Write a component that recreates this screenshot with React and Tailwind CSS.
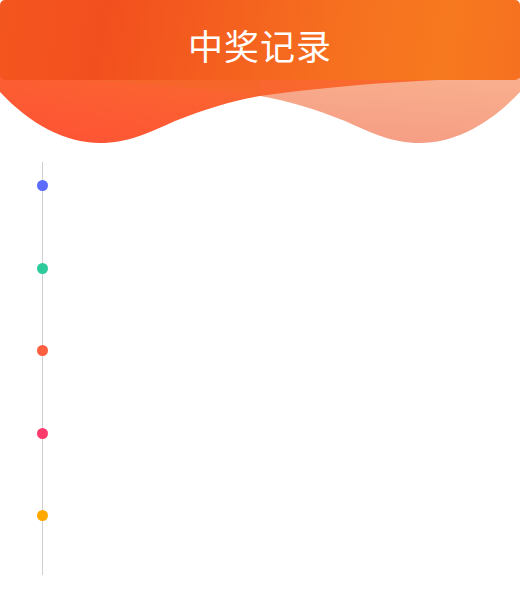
import React from "react";

const records = [
  { id: 1, color: "bg-[#5b6cff]" },
  { id: 2, color: "bg-[#2dca9c]" },
  { id: 3, color: "bg-[#ff5f3f]" },
  { id: 4, color: "bg-[#ff3b6c]" },
  { id: 5, color: "bg-[#ffa800]" },
];

const Waves = () => (
  <svg width="520" height="146" viewBox="0 0 520 146" className="block absolute inset-0">
    <defs>
      <linearGradient id="light" x1="1" y1="0" x2="0.6" y2="1">
        <stop offset="0" stopColor="#fbb992" />
        <stop offset="1" stopColor="#f59c84" />
      </linearGradient>
      <linearGradient id="dark" x1="0" y1="1" x2="1" y2="0">
        <stop offset="0" stopColor="#ff5236" />
        <stop offset="0.5" stopColor="#fa6530" />
        <stop offset="1" stopColor="#f7752a" />
      </linearGradient>
    </defs>
    {/* right light wave */}
    <path
      d="M520,92 C490,124 455,143 420,143 C392,143 372,133 345,121 C315,109 285,100 260,96 C190,86 90,78 0,78 L0,40 L520,40 Z"
      fill="url(#light)"
    />
    {/* left dark wave */}
    <path
      d="M0,92 C30,124 65,143 100,143 C128,143 148,133 175,121 C205,109 235,100 260,96 C330,86 430,78 520,78 L520,40 L0,40 Z"
      fill="url(#dark)"
    />
    {/* overlap band on the left */}
    <path d="M0,78 C90,78 190,86 260,96 L260,78 Z" fill="#f4662a" opacity="0.85" />
  </svg>
);

const App = () => {
  return (
    <div className="w-[520px] h-[600px] bg-white font-['Noto_Sans_CJK_SC','Noto_Sans',sans-serif]">
      <div className="relative h-[144px]">
        <Waves />
        <div className="relative h-[80px] rounded-[5px] bg-[linear-gradient(100deg,#f4561f_0%,#f24f1e_20%,#f6701f_65%,#f7791f_85%,#f6701f_100%)] flex items-center justify-center">
          <h1 className="text-white text-[35px] leading-none tracking-[1px] mt-[9px]">中奖记录</h1>
        </div>
      </div>

      <div className="mt-[18px] ml-[42px] w-px bg-[#cfcfcf]">
        {records.map((r) => (
          <div key={r.id} className="relative h-[82.6px]">
            <span className={`absolute left-[-5px] top-[18px] w-[11px] h-[11px] rounded-full ${r.color}`} />
          </div>
        ))}
      </div>
    </div>
  );
};

export default App;
